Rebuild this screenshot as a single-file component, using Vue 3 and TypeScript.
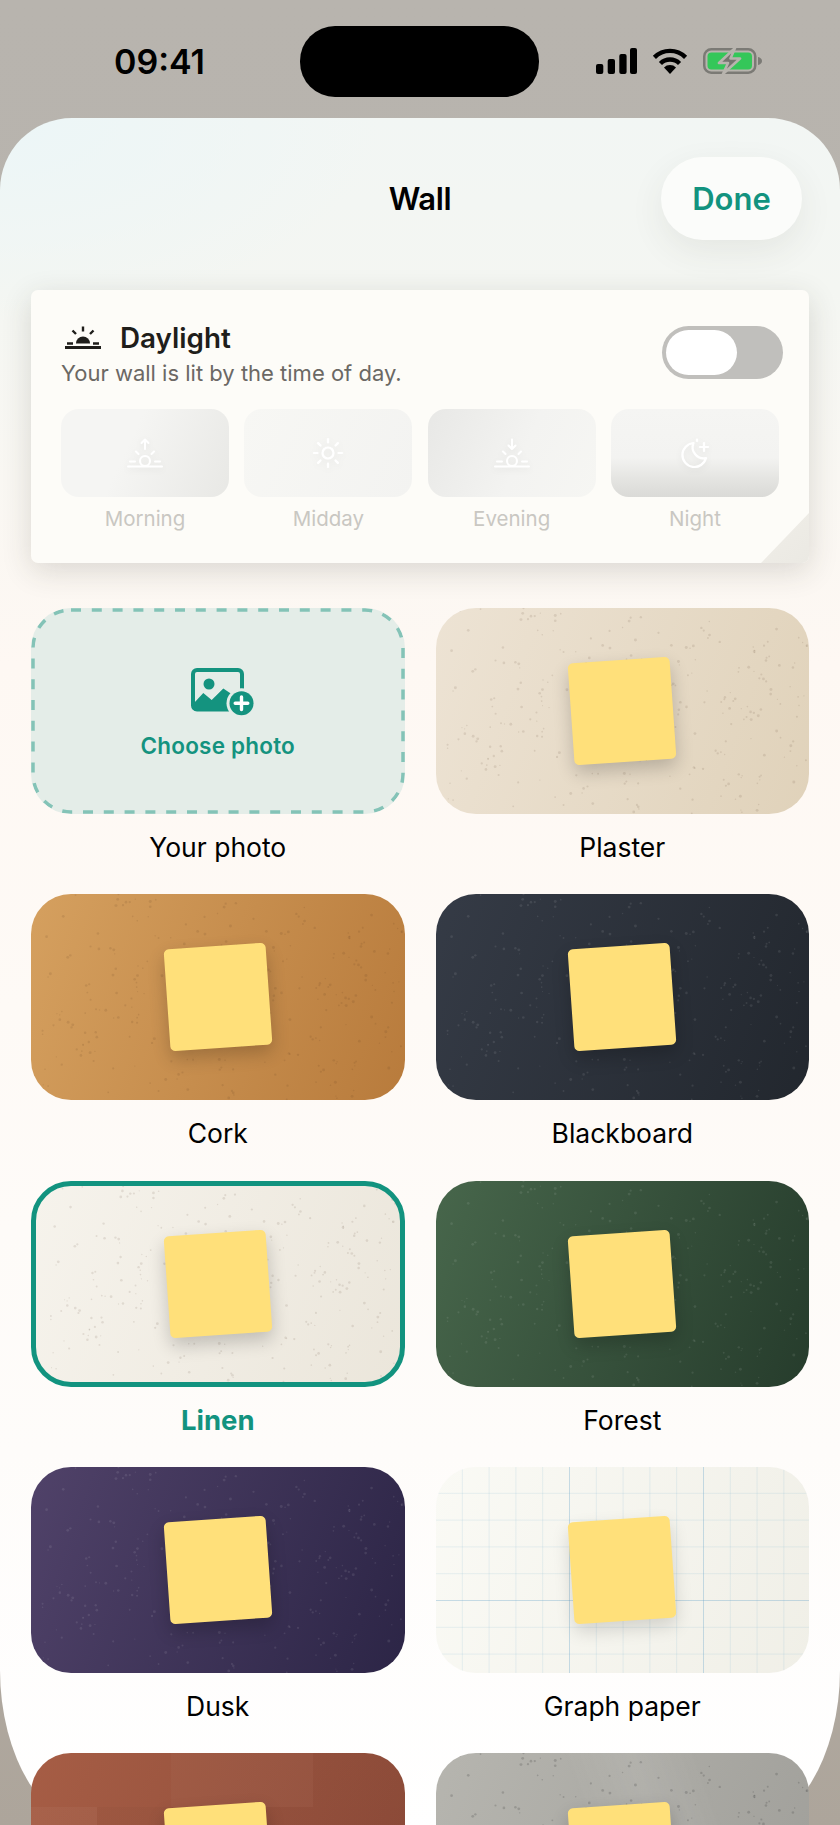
<script setup lang="ts">
type Wall = { name: string; kind: string; speckle: boolean }

const walls: Wall[] = [
  { name: 'Your photo', kind: 'photo', speckle: false },
  { name: 'Plaster', kind: 'plaster', speckle: true },
  { name: 'Cork', kind: 'cork', speckle: true },
  { name: 'Blackboard', kind: 'blackboard', speckle: true },
  { name: 'Linen', kind: 'linen', speckle: true },
  { name: 'Forest', kind: 'forest', speckle: true },
  { name: 'Dusk', kind: 'dusk', speckle: true },
  { name: 'Graph paper', kind: 'graph', speckle: false },
  { name: '', kind: 'brick', speckle: false },
  { name: '', kind: 'concrete', speckle: true },
]

const times = ['Morning', 'Midday', 'Evening', 'Night']

// same grain on every wall, seeded so it doesn't change between runs
function makeDots(count: number, w: number, h: number) {
  let seed = 41
  const rand = () => {
    seed = (seed + 0x6d2b79f5) | 0
    let t = Math.imul(seed ^ (seed >>> 15), 1 | seed)
    t = (t + Math.imul(t ^ (t >>> 7), 61 | t)) ^ t
    return ((t ^ (t >>> 14)) >>> 0) / 4294967296
  }
  const out: { x: number; y: number; r: number }[] = []
  for (let i = 0; i < count; i++) {
    // every fourth dot sits close to the one before it, which gives the small clumps
    const near = i % 4 === 3 && out.length > 0
    const last = out[out.length - 1]
    const x = near ? last.x + (rand() - 0.5) * 14 : rand() * w
    const y = near ? last.y + (rand() - 0.5) * 14 : rand() * h
    out.push({ x: +x.toFixed(1), y: +y.toFixed(1), r: +(0.6 + rand() * 0.9).toFixed(2) })
  }
  return out
}

const dots = makeDots(300, 374, 206)
</script>

<template>
  <div class="screen">
    <div class="status">
      <span class="time">09:41</span>
      <div class="island"></div>
      <div class="status-icons">
        <svg width="41" height="26" viewBox="0 0 41 26" fill="#000">
          <rect x="0" y="16" width="7.3" height="10" rx="2" />
          <rect x="11.7" y="11" width="7.3" height="15" rx="2" />
          <rect x="23.3" y="6" width="7.3" height="20" rx="2" />
          <rect x="34" y="0" width="7" height="26" rx="2" />
        </svg>
        <svg width="36" height="26" viewBox="0 0 36 26">
          <path d="M2.4 9.4A22 22 0 0 1 33.6 9.4" fill="none" stroke="#000" stroke-width="4.4" />
          <path d="M8.45 15.45A13.5 13.5 0 0 1 27.55 15.45" fill="none" stroke="#000" stroke-width="4.4" />
          <path d="M18 26L12 19.5A8.5 8.5 0 0 1 24 19.5Z" fill="#000" />
        </svg>
        <svg width="59" height="26" viewBox="0 0 59 26">
          <rect x="1.25" y="1.25" width="51" height="23.5" rx="7" fill="none" stroke="#7b7a75" stroke-width="2.5" />
          <rect x="4.5" y="4.5" width="44.5" height="17" rx="4" fill="#34c759" />
          <path d="M55 9c2.4.4 4 2 4 4s-1.600 3.600-4 4z" fill="#7b7a75" />
          <path d="M32 0L16 15H25L20 26L37 10.500H27.500Z" fill="#75746f" stroke="#b8b4ae" stroke-width="2.6" stroke-linejoin="round" />
        </svg>
      </div>
    </div>

    <div class="sheet">
      <header class="nav">
        <span></span>
        <h1 class="title">Wall</h1>
        <button class="done">Done</button>
      </header>

      <section class="panel">
        <div class="panel-head">
          <div>
            <div class="panel-title">
              <svg width="36" height="24" viewBox="0 0 36 24" fill="none" stroke="#1f1e1b">
                <path d="M0 21.500H36" stroke-width="3" stroke-linecap="round" />
                <path d="M11 17.500a7 7 0 0 1 14 0z" fill="#1f1e1b" stroke="none" />
                <path d="M2 17.500H8M28 17.500H34M18 0.500V5.500M7.500 4.500L11 8M28.500 4.500L25 8" stroke-width="2.400" />
              </svg>
              <span>Daylight</span>
            </div>
            <p class="panel-sub">Your wall is lit by the time of day.</p>
          </div>
          <div class="toggle"><div class="knob"></div></div>
        </div>

        <div class="times">
          <div v-for="t in times" :key="t" class="time-item">
            <div class="tile" :class="'tile-' + t.toLowerCase()">
              <svg v-if="t === 'Morning' || t === 'Evening'" width="36" height="32" viewBox="0 0 36 32" fill="none" stroke="#fff" stroke-width="2" stroke-linecap="round" stroke-linejoin="round">
                <path d="M1 29.500H35M3 24.500H8M28 24.500H33" />
                <circle cx="18" cy="24" r="5" />
                <path d="M9 14.500L11.500 17M27 14.500L24.500 17" />
                <path v-if="t === 'Morning'" d="M18 12V2.500M14.500 6L18 2.500L21.500 6" />
                <path v-else d="M18 2.500V12M14.500 8.500L18 12L21.500 8.500" />
              </svg>
              <svg v-else-if="t === 'Midday'" width="32" height="32" viewBox="0 0 32 32" fill="none" stroke="#fff" stroke-width="2.200" stroke-linecap="round">
                <circle cx="16" cy="16" r="5.500" />
                <path d="M16 2V5.500M16 26.500V30M2 16H5.500M26.500 16H30M6.100 6.100L8.500 8.500M23.500 23.500L25.900 25.900M6.100 25.900L8.500 23.500M23.500 8.500L25.900 6.100" />
              </svg>
              <svg v-else width="32" height="32" viewBox="0 0 32 32" fill="none" stroke="#fff" stroke-width="2.200" stroke-linecap="round" stroke-linejoin="round">
                <path d="M14.500 6A12 12 0 1 0 27 21A11 11 0 0 1 14.500 6Z" />
                <path d="M25 6V14M21 10H29M18 2.500V4" />
              </svg>
            </div>
            <span class="time-label">{{ t }}</span>
          </div>
        </div>
        <div class="fold"></div>
      </section>

      <div class="grid">
        <div v-for="w in walls" :key="w.kind" class="wall">
          <div class="card" :class="w.kind">
            <template v-if="w.kind === 'photo'">
              <svg class="dash" width="374" height="206" viewBox="0 0 374 206">
                <rect x="2" y="2" width="370" height="202" rx="38" fill="none" stroke="#84c3b7" stroke-width="3.500" stroke-dasharray="10 10.800" />
              </svg>
              <svg class="photo-icon" width="66" height="50" viewBox="0 0 66 50">
                <rect x="2" y="2" width="49" height="39.500" rx="4" fill="none" stroke="#14937f" stroke-width="4" />
                <circle cx="18" cy="16" r="5.500" fill="#14937f" />
                <path d="M3 35L12.300 25L20.700 32L32.300 20.500L42 27L50 43H5A2 2 0 0 1 3 41Z" fill="#14937f" />
                <circle cx="50.500" cy="35.300" r="15" fill="#e4ede8" />
                <circle cx="50.500" cy="35.300" r="12" fill="#14937f" />
                <path d="M50.500 29V41.600M44.200 35.300H56.800" stroke="#fff" stroke-width="3.400" stroke-linecap="round" />
              </svg>
              <span class="choose">Choose photo</span>
            </template>
            <template v-else>
              <svg v-if="w.speckle" class="grain" viewBox="0 0 374 206">
                <circle v-for="(d, i) in dots" :key="i" :cx="d.x" :cy="d.y" :r="d.r" />
              </svg>
              <div class="note"></div>
            </template>
          </div>
          <div v-if="w.name" class="label" :class="{ active: w.kind === 'linen' }">{{ w.name }}</div>
        </div>
      </div>
    </div>
  </div>
</template>

<style>
html, body {
  margin: 0;
  overflow: hidden;
}
</style>

<style scoped>
.screen {
  width: 840px;
  height: 1825px;
  overflow: hidden;
  font-family: Inter, "Liberation Sans", sans-serif;
  color: #000;
  background: linear-gradient(180deg, #b8b4ae 0%, #b6b2ab 60%, #ada59b 100%);
}

/* status bar */
.status {
  height: 118px;
  display: grid;
  grid-template-columns: 300px 239px 301px;
}

.time {
  margin-top: 40px;
  font-size: 34px;
  line-height: 44px;
  font-weight: 600;
  text-align: center;
  padding-left: 19px;
}

.island {
  margin-top: 26px;
  height: 71px;
  border-radius: 35px;
  background: #000;
}

.status-icons {
  margin-top: 48px;
  margin-left: 57px;
  display: flex;
  gap: 15px;
  align-items: flex-start;
}

/* sheet */
.sheet {
  height: 1712px;
  border-radius: 72px 72px 100px 100px / 72px 72px 160px 160px;
  background:
    radial-gradient(380px 200px at 0 0, #ecf6f7 0%, rgba(236, 246, 247, 0) 100%),
    linear-gradient(180deg, #f2f6f4 0%, #f4f6f2 10%, #fef8f3 32%, #fefaf6 52%, #fefcfa 78%, #fff 100%);
}

.nav {
  padding: 39px 38px 0;
  height: 83px;
  display: grid;
  grid-template-columns: 1fr auto 1fr;
  align-items: center;
}

.title {
  margin: 0;
  font-size: 31px;
  font-weight: 600;
  letter-spacing: -0.3px;
}

.done {
  justify-self: end;
  width: 141px;
  height: 83px;
  border: none;
  border-radius: 42px;
  background: #fbfcfa;
  color: #12937f;
  font-family: inherit;
  font-size: 31px;
  font-weight: 600;
  box-shadow: 0 12px 34px rgba(60, 60, 50, 0.08);
}

/* daylight card */
.panel {
  position: relative;
  margin: 50px 31px 0;
  padding: 31px 30px;
  height: 273px;
  box-sizing: border-box;
  border-radius: 7px;
  background: #fdfcf8;
  box-shadow: 0 8px 30px rgba(50, 50, 40, 0.16);
  overflow: hidden;
}

.panel-head {
  display: flex;
  justify-content: space-between;
  align-items: flex-start;
}

.panel-title {
  display: flex;
  align-items: center;
  gap: 19px;
  margin-left: 4px;
  height: 34px;
  font-size: 27.800px;
  font-weight: 600;
  color: #1f1e1b;
}

.panel-sub {
  margin: 3px 0 0;
  font-size: 22px;
  line-height: 30px;
  color: #6b6864;
}

.toggle {
  margin: 5px -4px 0 0;
  width: 121px;
  height: 53px;
  box-sizing: border-box;
  padding: 4px;
  border-radius: 27px;
  background: #c0bfbc;
}

.knob {
  width: 71px;
  height: 45px;
  border-radius: 23px;
  background: #fff;
}

.times {
  margin-top: 21px;
  display: grid;
  grid-template-columns: repeat(4, 168px);
  justify-content: space-between;
}

.time-item {
  display: flex;
  flex-direction: column;
  align-items: center;
}

.tile {
  width: 168px;
  height: 88px;
  border-radius: 18px;
  display: flex;
  align-items: center;
  justify-content: center;
}

.tile svg {
  filter: drop-shadow(0 2px 3px rgba(0, 0, 0, 0.06));
}

.tile-morning {
  background: linear-gradient(115deg, #f5f5f3 40%, #e8e8e5 100%);
}

.tile-midday {
  background: linear-gradient(115deg, #f7f7f4 0%, #f3f3f1 100%);
}

.tile-evening {
  background: linear-gradient(115deg, #e8e8e6 0%, #f3f3f1 55%, #f6f6f3 100%);
}

.tile-night {
  background: linear-gradient(180deg, #f5f5f3 0%, #f3f3f1 55%, #e4e4e1 80%, #dadad7 100%);
}

.time-label {
  margin-top: 9px;
  font-size: 20.500px;
  line-height: 26px;
  color: #c9c7c2;
}

.fold {
  position: absolute;
  right: 0;
  bottom: 0;
  width: 48px;
  height: 50px;
  background: linear-gradient(135deg, #f0eee8 0%, #ebe9e3 100%);
  clip-path: polygon(100% 0, 100% 100%, 0 100%);
}

/* wall swatches */
.grid {
  margin: 45px 31px 0;
  display: grid;
  grid-template-columns: 1fr 1fr;
  column-gap: 31px;
  row-gap: 30.300px;
}

.card {
  position: relative;
  height: 206px;
  box-sizing: border-box;
  border-radius: 40px;
  overflow: hidden;
  display: flex;
  flex-direction: column;
  align-items: center;
  justify-content: center;
}

.grain {
  position: absolute;
  inset: 0;
  width: 100%;
  height: 100%;
  fill: rgba(70, 50, 30, 0.11);
}

.note {
  position: relative;
  width: 102px;
  height: 102px;
  border-radius: 5px;
  background: #ffe07a;
  transform: rotate(-4deg);
  box-shadow: 0 8px 18px rgba(0, 0, 0, 0.2);
}

.photo {
  background: #e4ede8;
  padding-top: 5px;
}

.dash {
  position: absolute;
  inset: 0;
}

.photo-icon {
  margin-left: 13px;
}

.choose {
  margin-top: 14px;
  font-size: 22.500px;
  line-height: 28px;
  font-weight: 600;
  color: #14937f;
  letter-spacing: 0.2px;
}

.plaster {
  background: linear-gradient(110deg, #ede3d4 0%, #e0d2ba 100%);
}

.cork {
  background: linear-gradient(110deg, #d5a05f 0%, #b87b3c 100%);
}

.blackboard {
  background: linear-gradient(110deg, #353b46 0%, #22272e 100%);
}

.blackboard .grain,
.forest .grain,
.dusk .grain {
  fill: rgba(255, 255, 255, 0.09);
}

.linen {
  border: 5px solid #12937f;
  background: linear-gradient(110deg, #f6f3ec 0%, #ebe6db 100%);
}

.forest {
  background: linear-gradient(110deg, #47664b 0%, #263c2c 100%);
}

.dusk {
  background: linear-gradient(110deg, #504269 0%, #2c2546 100%);
}

.graph {
  background:
    linear-gradient(to right, transparent calc(100% - 1px), rgba(100, 160, 200, 0.24) 0) 0 0 / 134px 134px,
    linear-gradient(to bottom, transparent calc(100% - 1px), rgba(100, 160, 200, 0.24) 0) 0 0 / 134px 134px,
    linear-gradient(to right, transparent calc(100% - 1px), rgba(120, 175, 205, 0.16) 0) 0 0 / 26.800px 26.800px,
    linear-gradient(to bottom, transparent calc(100% - 1px), rgba(120, 175, 205, 0.16) 0) 0 0 / 26.800px 26.800px,
    linear-gradient(110deg, #fafaf5 0%, #f0efe7 100%);
}

.graph .note {
  box-shadow: 0 8px 18px rgba(0, 0, 0, 0.14);
}

.brick {
  background:
    linear-gradient(to right, rgba(255, 255, 255, 0) 140px, rgba(255, 255, 255, 0.025) 140px, rgba(255, 255, 255, 0.025) 282px, rgba(0, 0, 0, 0.02) 282px) 0 0 / 100% 54px no-repeat,
    linear-gradient(to right, rgba(255, 255, 255, 0.035) 66px, rgba(0, 0, 0, 0.025) 66px) 0 54px / 100% 152px no-repeat,
    linear-gradient(110deg, #a65d45 0%, #8c4a38 100%);
}

.concrete {
  background:
    linear-gradient(70deg, rgba(255, 255, 255, 0) 45%, rgba(255, 255, 255, 0.07) 60%, rgba(255, 255, 255, 0) 75%),
    linear-gradient(110deg, #b6b5af 0%, #a09f9a 100%);
}

.concrete .grain {
  fill: rgba(60, 60, 60, 0.22);
}

.label {
  margin-top: 16px;
  font-size: 26.500px;
  line-height: 34px;
  text-align: center;
}

.label.active {
  color: #12937f;
  font-size: 27.500px;
  font-weight: 700;
}
</style>
